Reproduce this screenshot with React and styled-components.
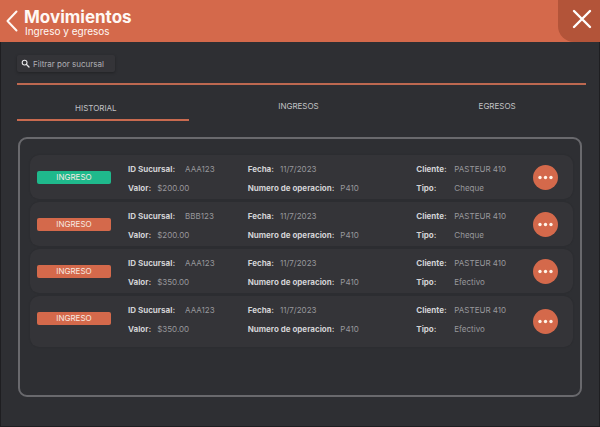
import React, { useState } from "react";
import styled, { createGlobalStyle, css } from "styled-components";

const color = {
  accent: "#d4694b",
  accentDark: "#b35439",
  success: "#1fb98c",
  page: "#2e2f33",
  card: "#343438",
  outline: "#69696d",
  edge: "#1e1e21",
  strong: "#d2d2d5",
  soft: "#98989c",
};

const GlobalStyle = createGlobalStyle`
  *, *::before, *::after { box-sizing: border-box; }
  body { margin: 0; background: ${color.page}; }
  body, button, input { font-family: Inter, "Liberation Sans", sans-serif; }
  button { border: 0; padding: 0; background: none; color: inherit; cursor: pointer; }
`;

const Page = styled.div`
  display: flex;
  flex-direction: column;
  min-height: 100vh;
  background: ${color.page};
`;

const Header = styled.header`
  display: flex;
  align-items: stretch;
  height: 42px;
  background: ${color.accent};
  color: #fff8f4;
`;

const BackButton = styled.button`
  display: flex;
  align-items: center;
  justify-content: center;
  width: 24px;
`;

const Heading = styled.div`
  flex: 1;
  padding-top: 9px;
`;

const Title = styled.h1`
  margin: 0;
  font-size: 17px;
  line-height: 16px;
  font-weight: 700;
`;

const Subtitle = styled.p`
  margin: 0;
  padding-left: 1px;
  font-size: 10px;
  line-height: 12px;
`;

const CloseButton = styled.button`
  display: flex;
  align-items: center;
  justify-content: center;
  width: 42px;
  padding: 0 0 4px 6px;
  border-bottom-left-radius: 16px;
  background: ${color.accentDark};
`;

const Main = styled.main`
  flex: 1;
  display: flex;
  flex-direction: column;
  padding: 13px 13px 29px 16px;
  border: 1px solid ${color.edge};
  border-width: 0 1px 1px;
`;

const Search = styled.label`
  display: flex;
  align-items: center;
  align-self: flex-start;
  gap: 3px;
  width: 98px;
  height: 17px;
  padding-left: 4px;
  border-radius: 2px;
  background: ${color.card};
  box-shadow: 0 1px 3px rgba(0, 0, 0, 0.3);
`;

const SearchInput = styled.input`
  flex: 1;
  min-width: 0;
  padding: 0;
  border: 0;
  outline: 0;
  background: transparent;
  color: ${color.strong};
  font-size: 8px;
  line-height: 12px;
  &::placeholder {
    color: #b0b0b4;
    opacity: 1;
  }
`;

const Tabs = styled.div`
  display: grid;
  grid-template-columns: 172fr 220fr 178fr;
  height: 38px;
  margin-top: 11px;
  border-top: 2px solid #bd6850;
`;

const Tab = styled.button`
  padding: 7px 0 0;
  color: #c2c2c5;
  font-size: 8px;
  line-height: 12px;
  border-bottom: 2px solid transparent;
  ${(p) =>
    p.$active &&
    css`
      padding: 12px 14px 0 0;
      border-color: #c96a4f;
    `}
`;

const Panel = styled.section`
  flex: 1;
  display: flex;
  flex-direction: column;
  gap: 3px;
  margin: 16px 4px 0 1px;
  padding: 16px 7px 48px 10px;
  border: 2px solid ${color.outline};
  border-radius: 9px;
`;

const Row = styled.article`
  display: grid;
  grid-template-columns: 74px 120fr 169fr 134fr 26px;
  height: ${(p) => (p.$tall ? 51 : 44)}px;
  padding: 0 14px 0 7px;
  border-radius: 9px;
  background: ${color.card};
  box-shadow: 0 0 2px rgba(0, 0, 0, 0.14);
`;

const Badge = styled.span`
  height: 13px;
  margin-top: 16px;
  border-radius: 2px;
  background: ${(p) => (p.$done ? color.success : color.accent)};
  color: #f6e9e2;
  font-size: 8px;
  line-height: 13px;
  text-align: center;
`;

const Details = styled.dl`
  margin: 0;
  padding: 8px 0 0 17px;
  font-size: 8px;
  line-height: 12px;
  white-space: nowrap;
`;

const Detail = styled.div`
  display: flex;
  gap: ${(p) => p.$gap || 0}px;
  & + & {
    margin-top: 7px;
  }
`;

const Term = styled.dt`
  min-width: ${(p) => p.$width || 0}px;
  color: ${color.strong};
  font-weight: 700;
`;

const Value = styled.dd`
  margin: 0;
  color: ${color.soft};
  font-weight: 400;
`;

const MoreButton = styled.button`
  display: flex;
  align-items: center;
  justify-content: center;
  align-self: center;
  width: 25px;
  height: 25px;
  && {
    border-radius: 50%;
    background: ${color.accent};
  }
`;

const movements = [
  { branch: "AAA123", amount: "$200.00", kind: "Cheque", done: true },
  { branch: "BBB123", amount: "$200.00", kind: "Cheque" },
  { branch: "AAA123", amount: "$350.00", kind: "Efectivo" },
  { branch: "AAA123", amount: "$350.00", kind: "Efectivo", tall: true },
];

const tabs = ["HISTORIAL", "INGRESOS", "EGRESOS"];

function Movement({ item }) {
  return (
    <Row $tall={item.tall}>
      <Badge $done={item.done}>INGRESO</Badge>
      <Details>
        <Detail $gap={10}>
          <Term>ID Sucursal:</Term>
          <Value>{item.branch}</Value>
        </Detail>
        <Detail $gap={6}>
          <Term>Valor:</Term>
          <Value>{item.amount}</Value>
        </Detail>
      </Details>
      <Details>
        <Detail $gap={6}>
          <Term>Fecha:</Term>
          <Value>11/7/2023</Value>
        </Detail>
        <Detail $gap={6}>
          <Term>Numero de operacion:</Term>
          <Value>P410</Value>
        </Detail>
      </Details>
      <Details>
        <Detail>
          <Term $width={38}>Cliente:</Term>
          <Value>PASTEUR 410</Value>
        </Detail>
        <Detail>
          <Term $width={38}>Tipo:</Term>
          <Value>{item.kind}</Value>
        </Detail>
      </Details>
      <MoreButton aria-label="Más opciones">
        <svg width="15" height="5" viewBox="0 0 15 5" fill="#fff4e8">
          <circle cx="2" cy="2.5" r="1.7" />
          <circle cx="7.5" cy="2.5" r="1.7" />
          <circle cx="13" cy="2.5" r="1.7" />
        </svg>
      </MoreButton>
    </Row>
  );
}

export default function App() {
  const [active, setActive] = useState(tabs[0]);
  return (
    <Page>
      <GlobalStyle />
      <Header>
        <BackButton aria-label="Volver">
          <svg width="12" height="22" viewBox="0 0 12 22" fill="none" stroke="#fff8f4" strokeWidth="2" strokeLinecap="round" strokeLinejoin="round">
            <path d="M10.5 1.5 1.5 11l9 9.5" />
          </svg>
        </BackButton>
        <Heading>
          <Title>Movimientos</Title>
          <Subtitle>Ingreso y egresos</Subtitle>
        </Heading>
        <CloseButton aria-label="Cerrar">
          <svg width="20" height="20" viewBox="0 0 20 20" fill="none" stroke="#ffffff" strokeWidth="2.4" strokeLinecap="round">
            <path d="M2 2l16 16M18 2 2 18" />
          </svg>
        </CloseButton>
      </Header>
      <Main>
        <Search>
          <svg width="9" height="9" viewBox="0 0 9 9" fill="none" stroke="#e8e8ea" strokeLinecap="round">
            <circle cx="3.6" cy="3.6" r="2.4" strokeWidth="1.1" />
            <path d="M5.5 5.5 8 8" strokeWidth="1.3" />
          </svg>
          <SearchInput placeholder="Filtrar por sucursal" aria-label="Filtrar por sucursal" />
        </Search>
        <Tabs role="tablist">
          {tabs.map((name) => (
            <Tab key={name} role="tab" aria-selected={name === active} $active={name === active} onClick={() => setActive(name)}>
              {name}
            </Tab>
          ))}
        </Tabs>
        <Panel>
          {movements.map((item, i) => (
            <Movement key={i} item={item} />
          ))}
        </Panel>
      </Main>
    </Page>
  );
}
